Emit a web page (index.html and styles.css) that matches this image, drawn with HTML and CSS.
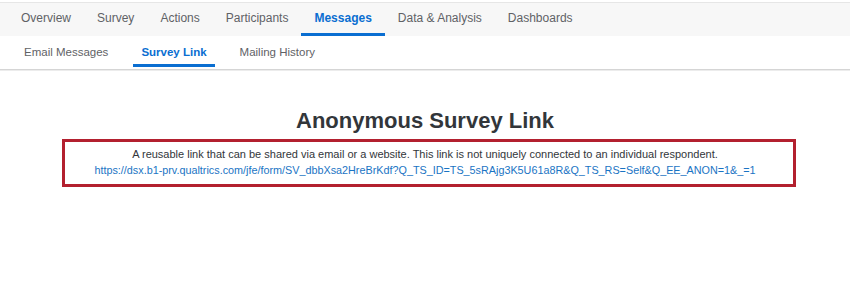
FILE: index.html
```html
<!DOCTYPE html>
<html>
<head>
<meta charset="utf-8">
<link rel="stylesheet" href="styles.css">
</head>
<body>
<div class="topbar">
  <nav class="tabs">
    <span class="tab">Overview</span>
    <span class="tab">Survey</span>
    <span class="tab">Actions</span>
    <span class="tab">Participants</span>
    <span class="tab active">Messages</span>
    <span class="tab">Data &amp; Analysis</span>
    <span class="tab">Dashboards</span>
  </nav>
</div>
<div class="subbar">
  <nav class="subtabs">
    <span class="subtab">Email Messages</span>
    <span class="subtab active">Survey Link</span>
    <span class="subtab">Mailing History</span>
  </nav>
</div>
<main class="content">
  <h1 class="title">Anonymous Survey Link</h1>
  <div class="linkbox">
    <p class="desc">A reusable link that can be shared via email or a website. This link is not uniquely connected to an individual respondent.</p>
    <a class="link">https://dsx.b1-prv.qualtrics.com/jfe/form/SV_dbbXsa2HreBrKdf?Q_TS_ID=TS_5sRAjg3K5U61a8R&amp;Q_TS_RS=Self&amp;Q_EE_ANON=1&amp;_=1</a>
  </div>
</main>
</body>
</html>
```
FILE: styles.css
```css
html, body {
  margin: 0;
  padding: 0;
  background: #ffffff;
  font-family: "Liberation Sans", Arial, sans-serif;
}
.topbar {
  margin-top: 2px;
  border-top: 1px solid #e6e6e6;
  background: #f7f7f7;
  height: 33px;
}
.tabs {
  display: flex;
  padding-left: 8px;
  height: 100%;
}
.tab {
  display: flex;
  align-items: center;
  padding: 0 13px;
  font-size: 12px;
  color: #5f6266;
  height: 30px;
  border-bottom: 3px solid transparent;
}
.tab.active {
  color: #0a6ed1;
  font-weight: bold;
  border-bottom-color: #0a6ed1;
}
.subbar {
  height: 33px;
  border-bottom: 1px solid #d5d5d5;
  box-shadow: 0 1px 0 #ececec;
  background: #fff;
}
.subtabs {
  display: flex;
  padding-left: 16px;
  height: 100%;
}
.subtab {
  display: flex;
  align-items: center;
  padding: 3px 8px 0;
  margin-right: 17px;
  font-size: 11.5px;
  color: #5f6266;
  height: 25px;
  border-bottom: 3px solid transparent;
}
.subtab.active {
  color: #0a6ed1;
  font-weight: bold;
  border-bottom-color: #0a6ed1;
}
.content {
  display: flex;
  flex-direction: column;
  align-items: center;
}
.title {
  margin: 38px 0 0;
  font-size: 22px;
  line-height: 26px;
  font-weight: bold;
  color: #32363a;
}
.linkbox {
  box-sizing: border-box;
  margin: 5px 0 0 8px;
  width: 734px;
  border: 3px solid #b3202f;
  padding: 4px 8px 6px 0;
  text-align: center;
}
.desc {
  margin: 0;
  font-size: 11px;
  line-height: 16px;
  color: #32363a;
}
.link {
  display: block;
  font-size: 10.8px;
  line-height: 16px;
  color: #1a74c4;
  text-decoration: none;
}
```
